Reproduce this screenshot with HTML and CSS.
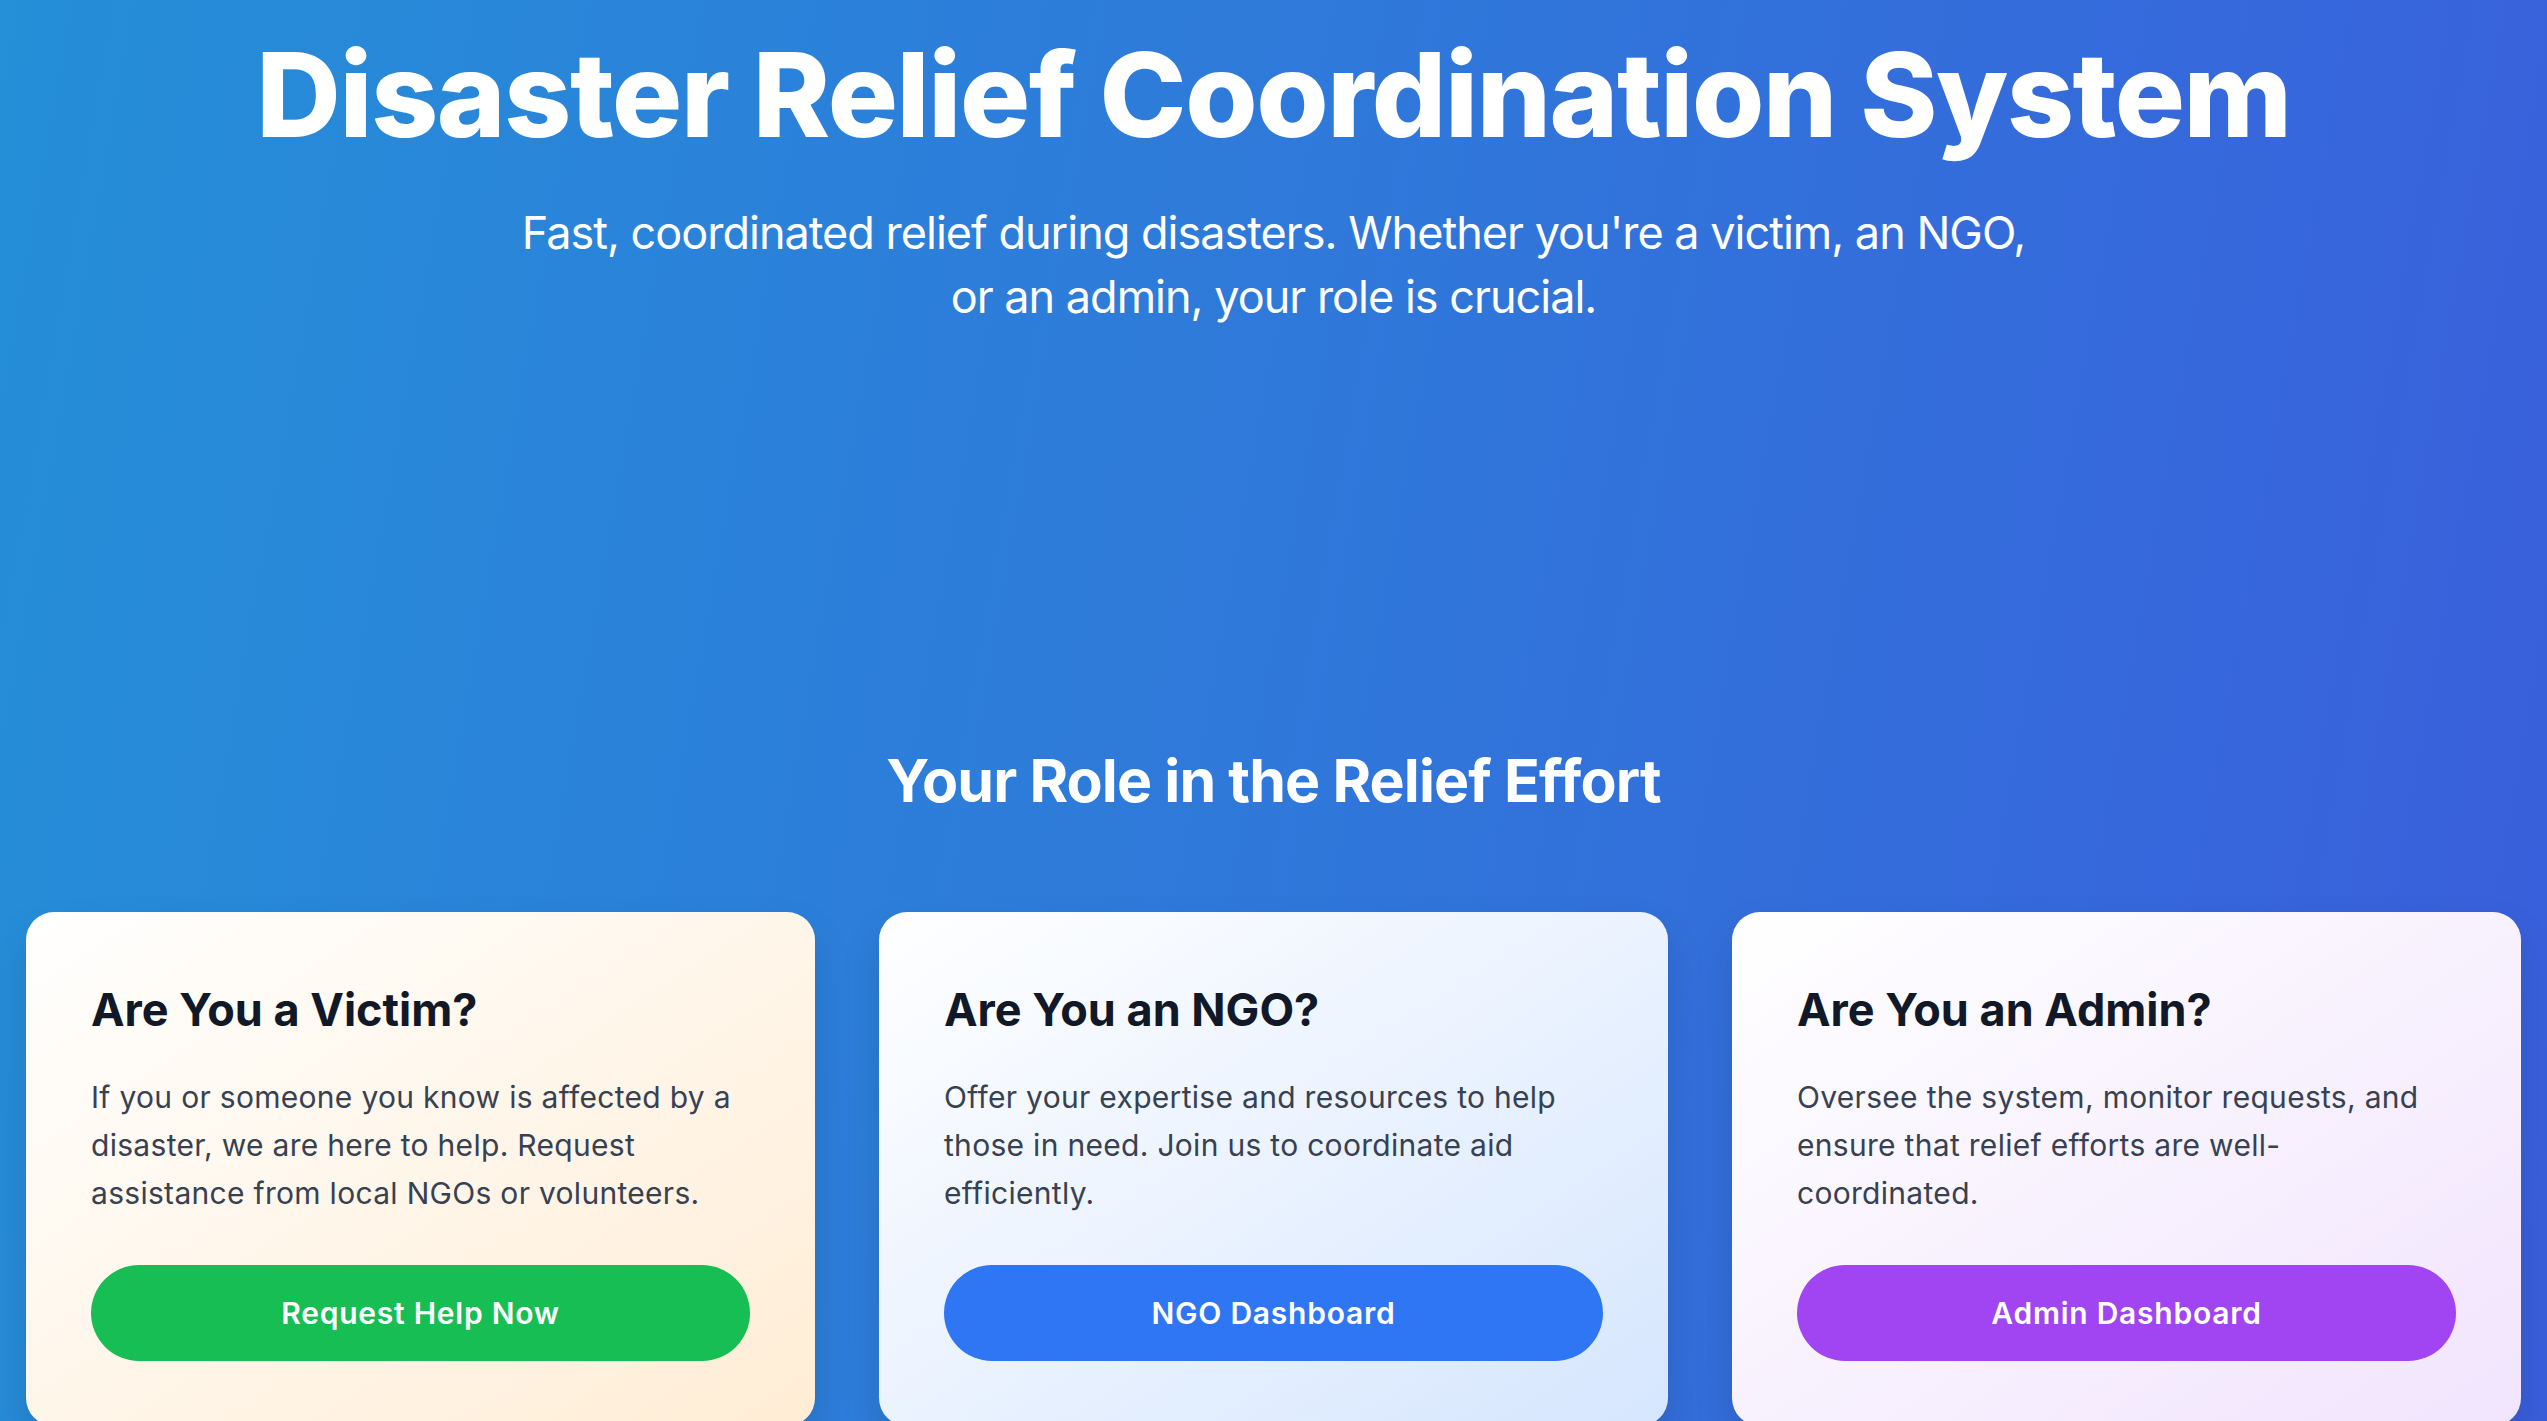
FILE: index.html
```html
<!DOCTYPE html>
<html lang="en">
<head>
<meta charset="utf-8">
<title>Disaster Relief Coordination System</title>
<link rel="stylesheet" href="styles.css">
</head>
<body>
<main class="page">
  <header class="hero">
    <h1 class="hero-title">Disaster Relief Coordination System</h1>
    <p class="hero-sub">Fast, coordinated relief during disasters. Whether you're a victim, an NGO,<br>or an admin, your role is crucial.</p>
  </header>
  <section class="roles">
    <h2 class="roles-title">Your Role in the Relief Effort</h2>
    <div class="cards">
      <article class="card card-victim">
        <h3 class="card-title">Are You a Victim?</h3>
        <p class="card-text">If you or someone you know is affected by a disaster, we are here to help. Request assistance from local NGOs or volunteers.</p>
        <a class="btn btn-green" href="#">Request Help Now</a>
      </article>
      <article class="card card-ngo">
        <h3 class="card-title">Are You an NGO?</h3>
        <p class="card-text">Offer your expertise and resources to help those in need. Join us to coordinate aid efficiently.</p>
        <a class="btn btn-blue" href="#">NGO Dashboard</a>
      </article>
      <article class="card card-admin">
        <h3 class="card-title">Are You an Admin?</h3>
        <p class="card-text">Oversee the system, monitor requests, and ensure that relief efforts are well-coordinated.</p>
        <a class="btn btn-purple" href="#">Admin Dashboard</a>
      </article>
    </div>
  </section>
</main>
</body>
</html>
```

FILE: styles.css
```css
* { box-sizing: border-box; }
html, body { margin: 0; padding: 0; }
body {
  font-family: Inter, "Noto Sans", sans-serif;
  background: linear-gradient(100deg, #258fd8 0%, #2f78da 50%, #3a5edc 100%);
  min-height: 100vh;
  color: #fff;
  overflow: hidden;
}
.page {
  display: flex;
  flex-direction: column;
  padding: 0 26px;
}
.hero {
  display: flex;
  flex-direction: column;
  align-items: center;
  text-align: center;
  padding-top: 36px;
}
.hero-title {
  margin: 0;
  font-size: 117px;
  line-height: 1;
  font-weight: 800;
  letter-spacing: -0.012em;
}
.hero-sub {
  margin: 48px 0 0;
  font-size: 45px;
  line-height: 64px;
  font-weight: 400;
  letter-spacing: -0.022em;
}
.roles {
  display: flex;
  flex-direction: column;
  align-items: center;
  margin-top: 416px;
}
.roles-title {
  margin: 0;
  font-size: 59px;
  line-height: 71px;
  font-weight: 700;
  letter-spacing: -0.015em;
}
.cards {
  margin-top: 96px;
  width: 100%;
  display: grid;
  grid-template-columns: repeat(3, 1fr);
  gap: 64px;
}
.card {
  border-radius: 28px;
  padding: 68px 65px 65px;
  display: flex;
  flex-direction: column;
  box-shadow: 0 20px 40px rgba(0,0,0,0.12);
}
.card-victim { background: linear-gradient(to bottom right, #ffffff, #ffedd5); }
.card-ngo { background: linear-gradient(to bottom right, #ffffff, #d6e6fe); }
.card-admin { background: linear-gradient(to bottom right, #ffffff, #f1e4fd); }
.card-title {
  margin: 0;
  font-size: 45px;
  line-height: 60px;
  font-weight: 700;
  color: #111827;
}
.card-text {
  margin: 33px 0 0;
  font-size: 30px;
  line-height: 48px;
  letter-spacing: 0.01em;
  color: #374151;
}
.btn {
  margin-top: 48px;
  height: 96px;
  border-radius: 48px;
  display: flex;
  align-items: center;
  justify-content: center;
  color: #fff;
  text-decoration: none;
  font-size: 30px;
  font-weight: 600;
  letter-spacing: 0.025em;
}
.btn-green { background: #16be53; }
.btn-blue { background: #2e76f4; }
.btn-purple { background: #a045f1; }
```
